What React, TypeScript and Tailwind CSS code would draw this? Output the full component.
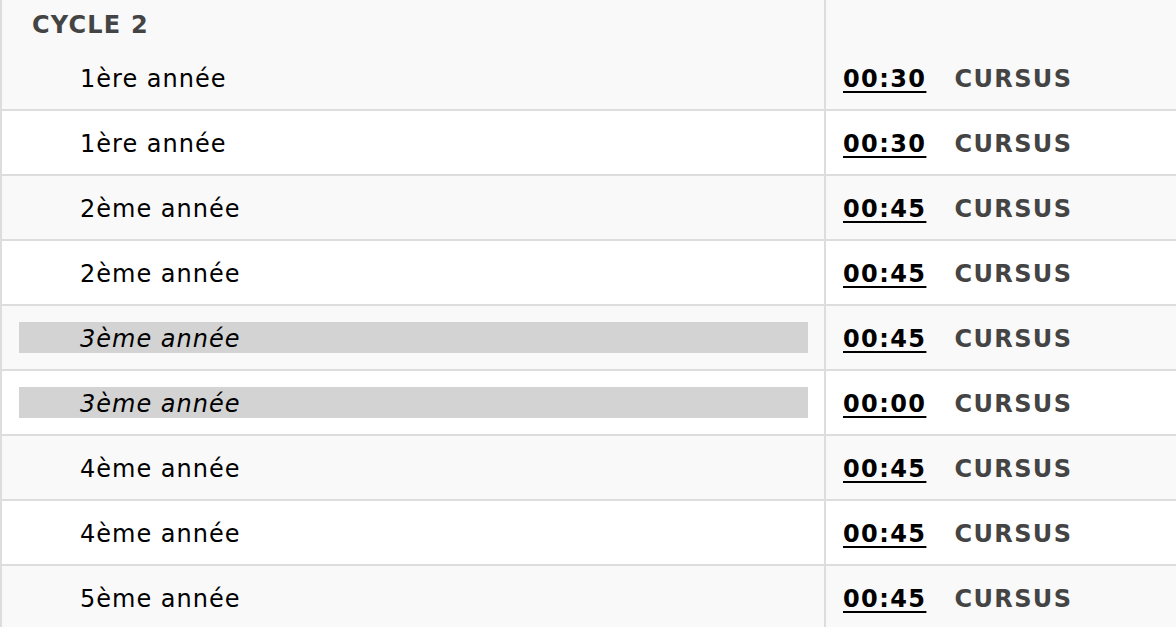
const rows = [
  { label: '1ère année', time: '00:30', hl: false },
  { label: '1ère année', time: '00:30', hl: false },
  { label: '2ème année', time: '00:45', hl: false },
  { label: '2ème année', time: '00:45', hl: false },
  { label: '3ème année', time: '00:45', hl: true },
  { label: '3ème année', time: '00:00', hl: true },
  { label: '4ème année', time: '00:45', hl: false },
  { label: '4ème année', time: '00:45', hl: false },
  { label: '5ème année', time: '00:45', hl: false },
];

export default function App() {
  return (
    <div
      className="w-[1176px] h-[627px] overflow-hidden bg-white text-[24px] text-black tracking-[1px]"
      style={{ fontFamily: '"DejaVu Sans", Verdana, sans-serif' }}
    >
      <div className="border-l-2 border-[#dddddd]">
        {rows.map((r, i) => (
          <div
            key={i}
            className={`flex border-b-2 border-[#dddddd] ${i % 2 === 0 ? 'bg-[#f9f9f9]' : 'bg-white'}`}
          >
            <div className="w-[822px] flex flex-col">
              {i === 0 && (
                <div className="h-[46px] pl-[30px] pt-[3px] flex items-center font-bold text-[#444444] tracking-[1.2px]">
                  CYCLE 2
                </div>
              )}
              <div className="h-[63px] pl-[17px] pr-[16px] flex items-center">
                <div className={`w-full h-[31px] pl-[61px] pt-[2px] flex items-center ${r.hl ? 'bg-[#d3d3d3] italic' : ''}`}>
                  {r.label}
                </div>
              </div>
            </div>
            <div className="flex-1 border-l-2 border-[#dddddd] flex flex-col justify-end">
              <div className="h-[63px] pl-[17px] pt-[2px] flex items-center gap-[28px] font-bold tracking-[1.4px]">
                <span className="underline decoration-2 underline-offset-[4px]">{r.time}</span>
                <span className="text-[#444444]">CURSUS</span>
              </div>
            </div>
          </div>
        ))}
      </div>
    </div>
  );
}
